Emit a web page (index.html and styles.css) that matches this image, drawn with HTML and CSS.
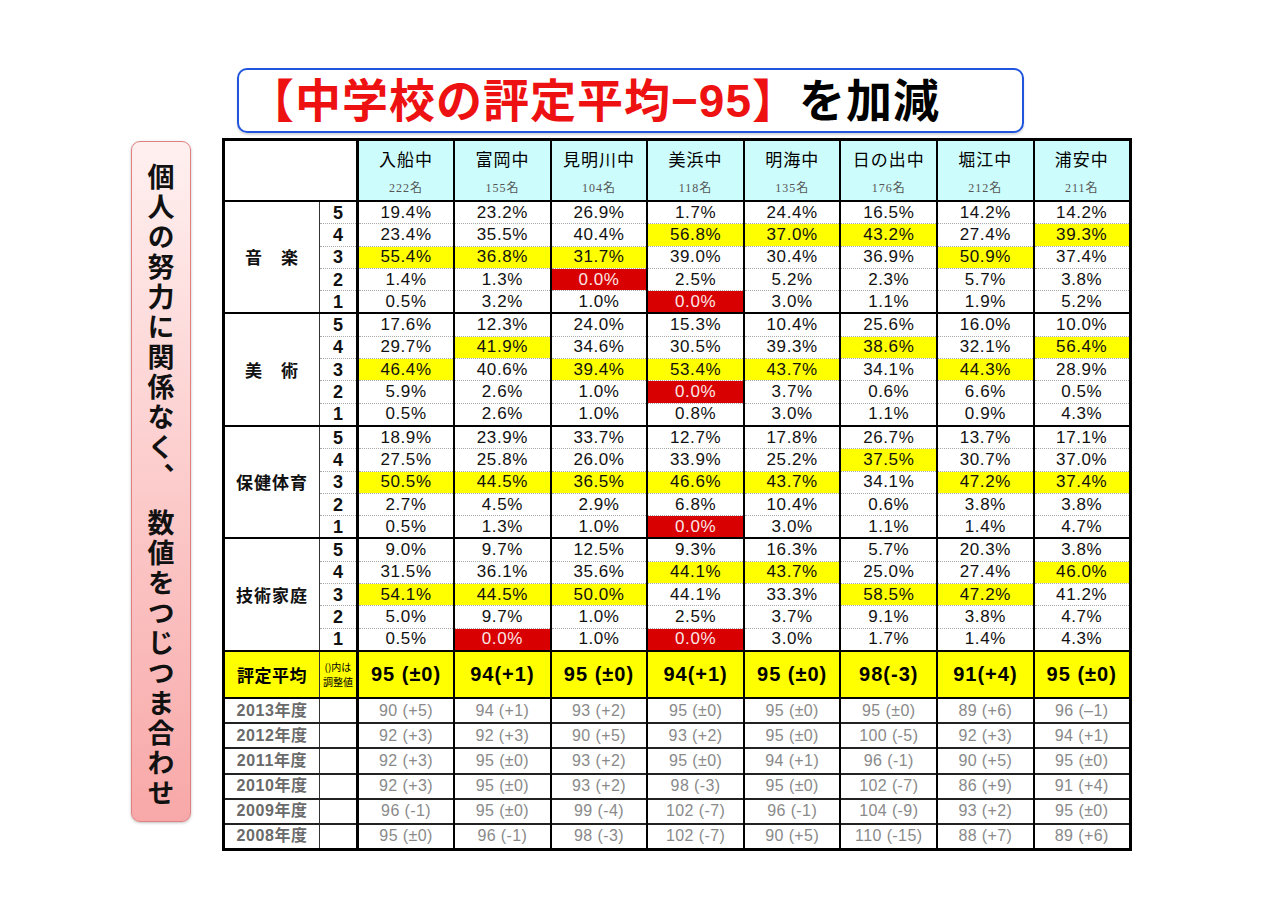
FILE: index.html
```html
<!DOCTYPE html>
<html lang="ja">
<head>
<meta charset="utf-8">
<title>中学校の評定平均</title>
<link rel="stylesheet" href="styles.css">
</head>
<body>
<div class="page">
  <div class="title-box">
    <h1 class="title"><span class="red">【中学校の評定平均−95】</span><span class="black">を加減</span></h1>
  </div>
  <div class="main">
    <aside class="note"><span>個人の努力に関係なく、　数値をつじつま合わせ</span></aside>
    <table class="grid">
      <colgroup>
        <col class="c-label"><col class="c-grade">
        <col class="c-s"><col class="c-s"><col class="c-s"><col class="c-s"><col class="c-s"><col class="c-s"><col class="c-s"><col class="c-s">
      </colgroup>
      <tr class="head">
        <td colspan="2" class="blank"></td>
        <td class="sch"><div class="sn">入船中</div><div class="cnt">222名</div></td>
        <td class="sch"><div class="sn">富岡中</div><div class="cnt">155名</div></td>
        <td class="sch"><div class="sn">見明川中</div><div class="cnt">104名</div></td>
        <td class="sch"><div class="sn">美浜中</div><div class="cnt">118名</div></td>
        <td class="sch"><div class="sn">明海中</div><div class="cnt">135名</div></td>
        <td class="sch"><div class="sn">日の出中</div><div class="cnt">176名</div></td>
        <td class="sch"><div class="sn">堀江中</div><div class="cnt">212名</div></td>
        <td class="sch"><div class="sn">浦安中</div><div class="cnt">211名</div></td>
      </tr>

      <tr class="d g"><td rowspan="5" class="subj">音　楽</td><td class="gr">5</td><td>19.4%</td><td>23.2%</td><td>26.9%</td><td>1.7%</td><td>24.4%</td><td>16.5%</td><td>14.2%</td><td>14.2%</td></tr>
      <tr class="d"><td class="gr">4</td><td>23.4%</td><td>35.5%</td><td>40.4%</td><td class="y">56.8%</td><td class="y">37.0%</td><td class="y">43.2%</td><td>27.4%</td><td class="y">39.3%</td></tr>
      <tr class="d"><td class="gr">3</td><td class="y">55.4%</td><td class="y">36.8%</td><td class="y">31.7%</td><td>39.0%</td><td>30.4%</td><td>36.9%</td><td class="y">50.9%</td><td>37.4%</td></tr>
      <tr class="d"><td class="gr">2</td><td>1.4%</td><td>1.3%</td><td class="r">0.0%</td><td>2.5%</td><td>5.2%</td><td>2.3%</td><td>5.7%</td><td>3.8%</td></tr>
      <tr class="d"><td class="gr">1</td><td>0.5%</td><td>3.2%</td><td>1.0%</td><td class="r">0.0%</td><td>3.0%</td><td>1.1%</td><td>1.9%</td><td>5.2%</td></tr>

      <tr class="d g"><td rowspan="5" class="subj">美　術</td><td class="gr">5</td><td>17.6%</td><td>12.3%</td><td>24.0%</td><td>15.3%</td><td>10.4%</td><td>25.6%</td><td>16.0%</td><td>10.0%</td></tr>
      <tr class="d"><td class="gr">4</td><td>29.7%</td><td class="y">41.9%</td><td>34.6%</td><td>30.5%</td><td>39.3%</td><td class="y">38.6%</td><td>32.1%</td><td class="y">56.4%</td></tr>
      <tr class="d"><td class="gr">3</td><td class="y">46.4%</td><td>40.6%</td><td class="y">39.4%</td><td class="y">53.4%</td><td class="y">43.7%</td><td>34.1%</td><td class="y">44.3%</td><td>28.9%</td></tr>
      <tr class="d"><td class="gr">2</td><td>5.9%</td><td>2.6%</td><td>1.0%</td><td class="r">0.0%</td><td>3.7%</td><td>0.6%</td><td>6.6%</td><td>0.5%</td></tr>
      <tr class="d"><td class="gr">1</td><td>0.5%</td><td>2.6%</td><td>1.0%</td><td>0.8%</td><td>3.0%</td><td>1.1%</td><td>0.9%</td><td>4.3%</td></tr>

      <tr class="d g"><td rowspan="5" class="subj">保健体育</td><td class="gr">5</td><td>18.9%</td><td>23.9%</td><td>33.7%</td><td>12.7%</td><td>17.8%</td><td>26.7%</td><td>13.7%</td><td>17.1%</td></tr>
      <tr class="d"><td class="gr">4</td><td>27.5%</td><td>25.8%</td><td>26.0%</td><td>33.9%</td><td>25.2%</td><td class="y">37.5%</td><td>30.7%</td><td>37.0%</td></tr>
      <tr class="d"><td class="gr">3</td><td class="y">50.5%</td><td class="y">44.5%</td><td class="y">36.5%</td><td class="y">46.6%</td><td class="y">43.7%</td><td>34.1%</td><td class="y">47.2%</td><td class="y">37.4%</td></tr>
      <tr class="d"><td class="gr">2</td><td>2.7%</td><td>4.5%</td><td>2.9%</td><td>6.8%</td><td>10.4%</td><td>0.6%</td><td>3.8%</td><td>3.8%</td></tr>
      <tr class="d"><td class="gr">1</td><td>0.5%</td><td>1.3%</td><td>1.0%</td><td class="r">0.0%</td><td>3.0%</td><td>1.1%</td><td>1.4%</td><td>4.7%</td></tr>

      <tr class="d g"><td rowspan="5" class="subj">技術家庭</td><td class="gr">5</td><td>9.0%</td><td>9.7%</td><td>12.5%</td><td>9.3%</td><td>16.3%</td><td>5.7%</td><td>20.3%</td><td>3.8%</td></tr>
      <tr class="d"><td class="gr">4</td><td>31.5%</td><td>36.1%</td><td>35.6%</td><td class="y">44.1%</td><td class="y">43.7%</td><td>25.0%</td><td>27.4%</td><td class="y">46.0%</td></tr>
      <tr class="d"><td class="gr">3</td><td class="y">54.1%</td><td class="y">44.5%</td><td class="y">50.0%</td><td>44.1%</td><td>33.3%</td><td class="y">58.5%</td><td class="y">47.2%</td><td>41.2%</td></tr>
      <tr class="d"><td class="gr">2</td><td>5.0%</td><td>9.7%</td><td>1.0%</td><td>2.5%</td><td>3.7%</td><td>9.1%</td><td>3.8%</td><td>4.7%</td></tr>
      <tr class="d"><td class="gr">1</td><td>0.5%</td><td class="r">0.0%</td><td>1.0%</td><td class="r">0.0%</td><td>3.0%</td><td>1.7%</td><td>1.4%</td><td>4.3%</td></tr>

      <tr class="avg"><td class="avg-label">評定平均</td><td class="avg-note">()内は<br>調整値</td><td>95 (±0)</td><td>94(+1)</td><td>95 (±0)</td><td>94(+1)</td><td>95 (±0)</td><td>98(-3)</td><td>91(+4)</td><td>95 (±0)</td></tr>

      <tr class="h"><td class="yr">2013年度</td><td class="hb"></td><td>90 (+5)</td><td>94 (+1)</td><td>93 (+2)</td><td>95 (±0)</td><td>95 (±0)</td><td>95 (±0)</td><td>89 (+6)</td><td>96 (–1)</td></tr>
      <tr class="h"><td class="yr">2012年度</td><td class="hb"></td><td>92 (+3)</td><td>92 (+3)</td><td>90 (+5)</td><td>93 (+2)</td><td>95 (±0)</td><td>100 (-5)</td><td>92 (+3)</td><td>94 (+1)</td></tr>
      <tr class="h"><td class="yr">2011年度</td><td class="hb"></td><td>92 (+3)</td><td>95 (±0)</td><td>93 (+2)</td><td>95 (±0)</td><td>94 (+1)</td><td>96 (-1)</td><td>90 (+5)</td><td>95 (±0)</td></tr>
      <tr class="h"><td class="yr">2010年度</td><td class="hb"></td><td>92 (+3)</td><td>95 (±0)</td><td>93 (+2)</td><td>98 (-3)</td><td>95 (±0)</td><td>102 (-7)</td><td>86 (+9)</td><td>91 (+4)</td></tr>
      <tr class="h"><td class="yr">2009年度</td><td class="hb"></td><td>96 (-1)</td><td>95 (±0)</td><td>99 (-4)</td><td>102 (-7)</td><td>96 (-1)</td><td>104 (-9)</td><td>93 (+2)</td><td>95 (±0)</td></tr>
      <tr class="h"><td class="yr">2008年度</td><td class="hb"></td><td>95 (±0)</td><td>96 (-1)</td><td>98 (-3)</td><td>102 (-7)</td><td>90 (+5)</td><td>110 (-15)</td><td>88 (+7)</td><td>89 (+6)</td></tr>
    </table>
  </div>
</div>
</body>
</html>
```
FILE: styles.css
```css
html, body {
  margin: 0;
  padding: 0;
  background: #ffffff;
}
body {
  font-family: "Liberation Sans", "Noto Sans CJK JP", sans-serif;
  color: #000;
}
.page {
  width: 1280px;
  height: 904px;
  padding-top: 68px;
  box-sizing: border-box;
}
.title-box {
  margin-left: 237px;
  width: 787px;
  height: 65px;
  box-sizing: border-box;
  border: 2px solid #2255dd;
  border-radius: 10px;
  display: flex;
  align-items: center;
  padding-left: 9px;
  box-shadow: 0 2px 2px rgba(0,0,0,0.15);
}
.title {
  margin: 0;
  font-family: "Liberation Sans", "Noto Sans CJK JP", sans-serif;
  font-weight: bold;
  font-size: 46px;
  line-height: 1;
  letter-spacing: 1px;
  white-space: nowrap;
}
.title .red { color: #ee1111; }
.title .black { color: #000; margin-left: 0; }

.main {
  display: flex;
  align-items: flex-start;
  margin-top: 5px;
}
.note {
  margin-left: 131px;
  margin-top: 3px;
  width: 60px;
  height: 681px;
  box-sizing: border-box;
  border: 1px solid #e08080;
  border-radius: 9px;
  background: linear-gradient(to bottom, #fff0f0 0%, #fcc8c8 55%, #f8a8a8 100%);
  box-shadow: 0 1px 3px rgba(0,0,0,0.25);
  display: flex;
  justify-content: center;
  padding-top: 21px;
}
.note span {
  writing-mode: vertical-rl;
  font-family: "Noto Sans CJK JP", sans-serif;
  font-weight: bold;
  font-size: 27px;
  letter-spacing: 3px;
  line-height: 1;
  color: #111;
}

.grid {
  margin-left: 31px;
  border-collapse: collapse;
  table-layout: fixed;
  width: 907px;
  border: 3px solid #000;
}
.c-label { width: 96px; }
.c-grade { width: 38px; }
.c-s { width: 96.6px; }
.grid td {
  padding: 0;
  text-align: center;
  vertical-align: middle;
  border-left: 2px solid #000;
  border-right: 2px solid #000;
  white-space: nowrap;
  overflow: hidden;
}
.head td { height: 59px; border-bottom: 2px solid #000; }
.head .blank { background: #fff; border-right: 3px solid #000; }
.sch {
  background: #cdfcfc;
}
.sn {
  font-family: "Noto Sans CJK JP", sans-serif;
  font-size: 17px;
  letter-spacing: 1px;
  line-height: 22px;
  margin-top: 2px;
}
.cnt {
  font-family: "Liberation Serif", "Noto Sans CJK JP", serif;
  font-size: 12px;
  color: #555;
  letter-spacing: 1px;
  line-height: 16px;
  margin-top: 10px;
}

.d td {
  height: 21.3px;
  font-size: 17px;
  line-height: 18px;
  letter-spacing: 0.6px;
  color: #111;
  border-top: 1px dotted #aaa;
}
.d.g td { border-top: 2px solid #000; }
.d td.subj {
  font-family: "Noto Sans CJK JP", sans-serif;
  font-weight: bold;
  font-size: 17px;
  letter-spacing: 1px;
  border-right: 1px solid #333;
}
.d td.gr {
  font-weight: bold;
  font-size: 18px;
  border-left: 1px solid #333;
  border-right: 3px solid #000;
  letter-spacing: 0;
}
.d td.y { background: #ffff00; }
.d td.r { background: #d80000; color: #fbe6e6; }

.avg td {
  height: 45px;
  background: #ffff00;
  border-top: 2px solid #000;
  border-bottom: 2px solid #000;
  font-weight: bold;
  font-size: 20px;
  letter-spacing: 1px;
}
.avg td.avg-label {
  font-family: "Noto Sans CJK JP", sans-serif;
  font-size: 17px;
  letter-spacing: 0.5px;
  border-right: 1px solid #333;
}
.avg td.avg-note {
  font-family: "Noto Sans CJK JP", sans-serif;
  font-weight: normal;
  font-size: 10px;
  line-height: 15px;
  letter-spacing: 0;
  border-left: 1px solid #333;
  border-right: 3px solid #000;
}

.h td {
  height: 23.2px;
  border-top: 2px solid #222;
  font-size: 16px;
  line-height: 18px;
  letter-spacing: 0.4px;
  color: #8a8a8a;
}
.h td.yr {
  font-weight: bold;
  font-size: 16px;
  color: #6a6a6a;
  letter-spacing: 0.6px;
  border-right: 1px solid #333;
}
.h td.hb {
  border-left: 1px solid #333;
  border-right: 3px solid #000;
}
```
